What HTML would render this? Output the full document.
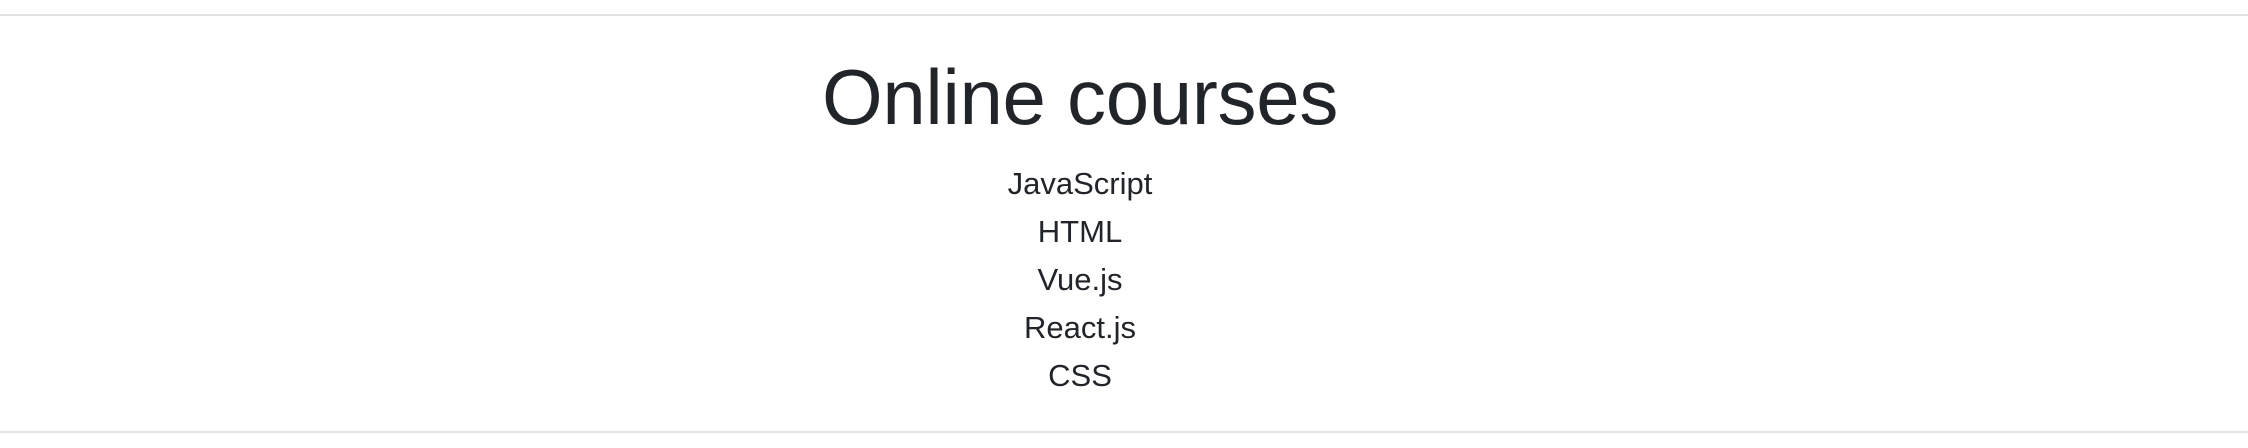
<!DOCTYPE html>
<html><head><meta charset="utf-8"><style>
html,body{margin:0;padding:0;background:#fff;width:2248px;height:448px;overflow:hidden;position:relative;font-family:"Liberation Sans",Arial,sans-serif;color:#212529}
.hr{position:absolute;left:0;width:2248px;height:2px;background:#e3e3e3}
h1{position:absolute;margin:0;left:0;width:2160px;text-align:center;top:58px;font-size:78px;line-height:78px;font-weight:normal;letter-spacing:-0.3px}
ul{position:absolute;margin:0;padding:0;list-style:none;left:0;width:2160px;top:160px;text-align:center;font-size:31px;line-height:48px}
</style></head><body>
<div class="hr" style="top:14px"></div>
<h1>Online courses</h1>
<ul><li>JavaScript</li><li>HTML</li><li>Vue.js</li><li>React.js</li><li>CSS</li></ul>
<div class="hr" style="top:431px"></div>
</body></html>
